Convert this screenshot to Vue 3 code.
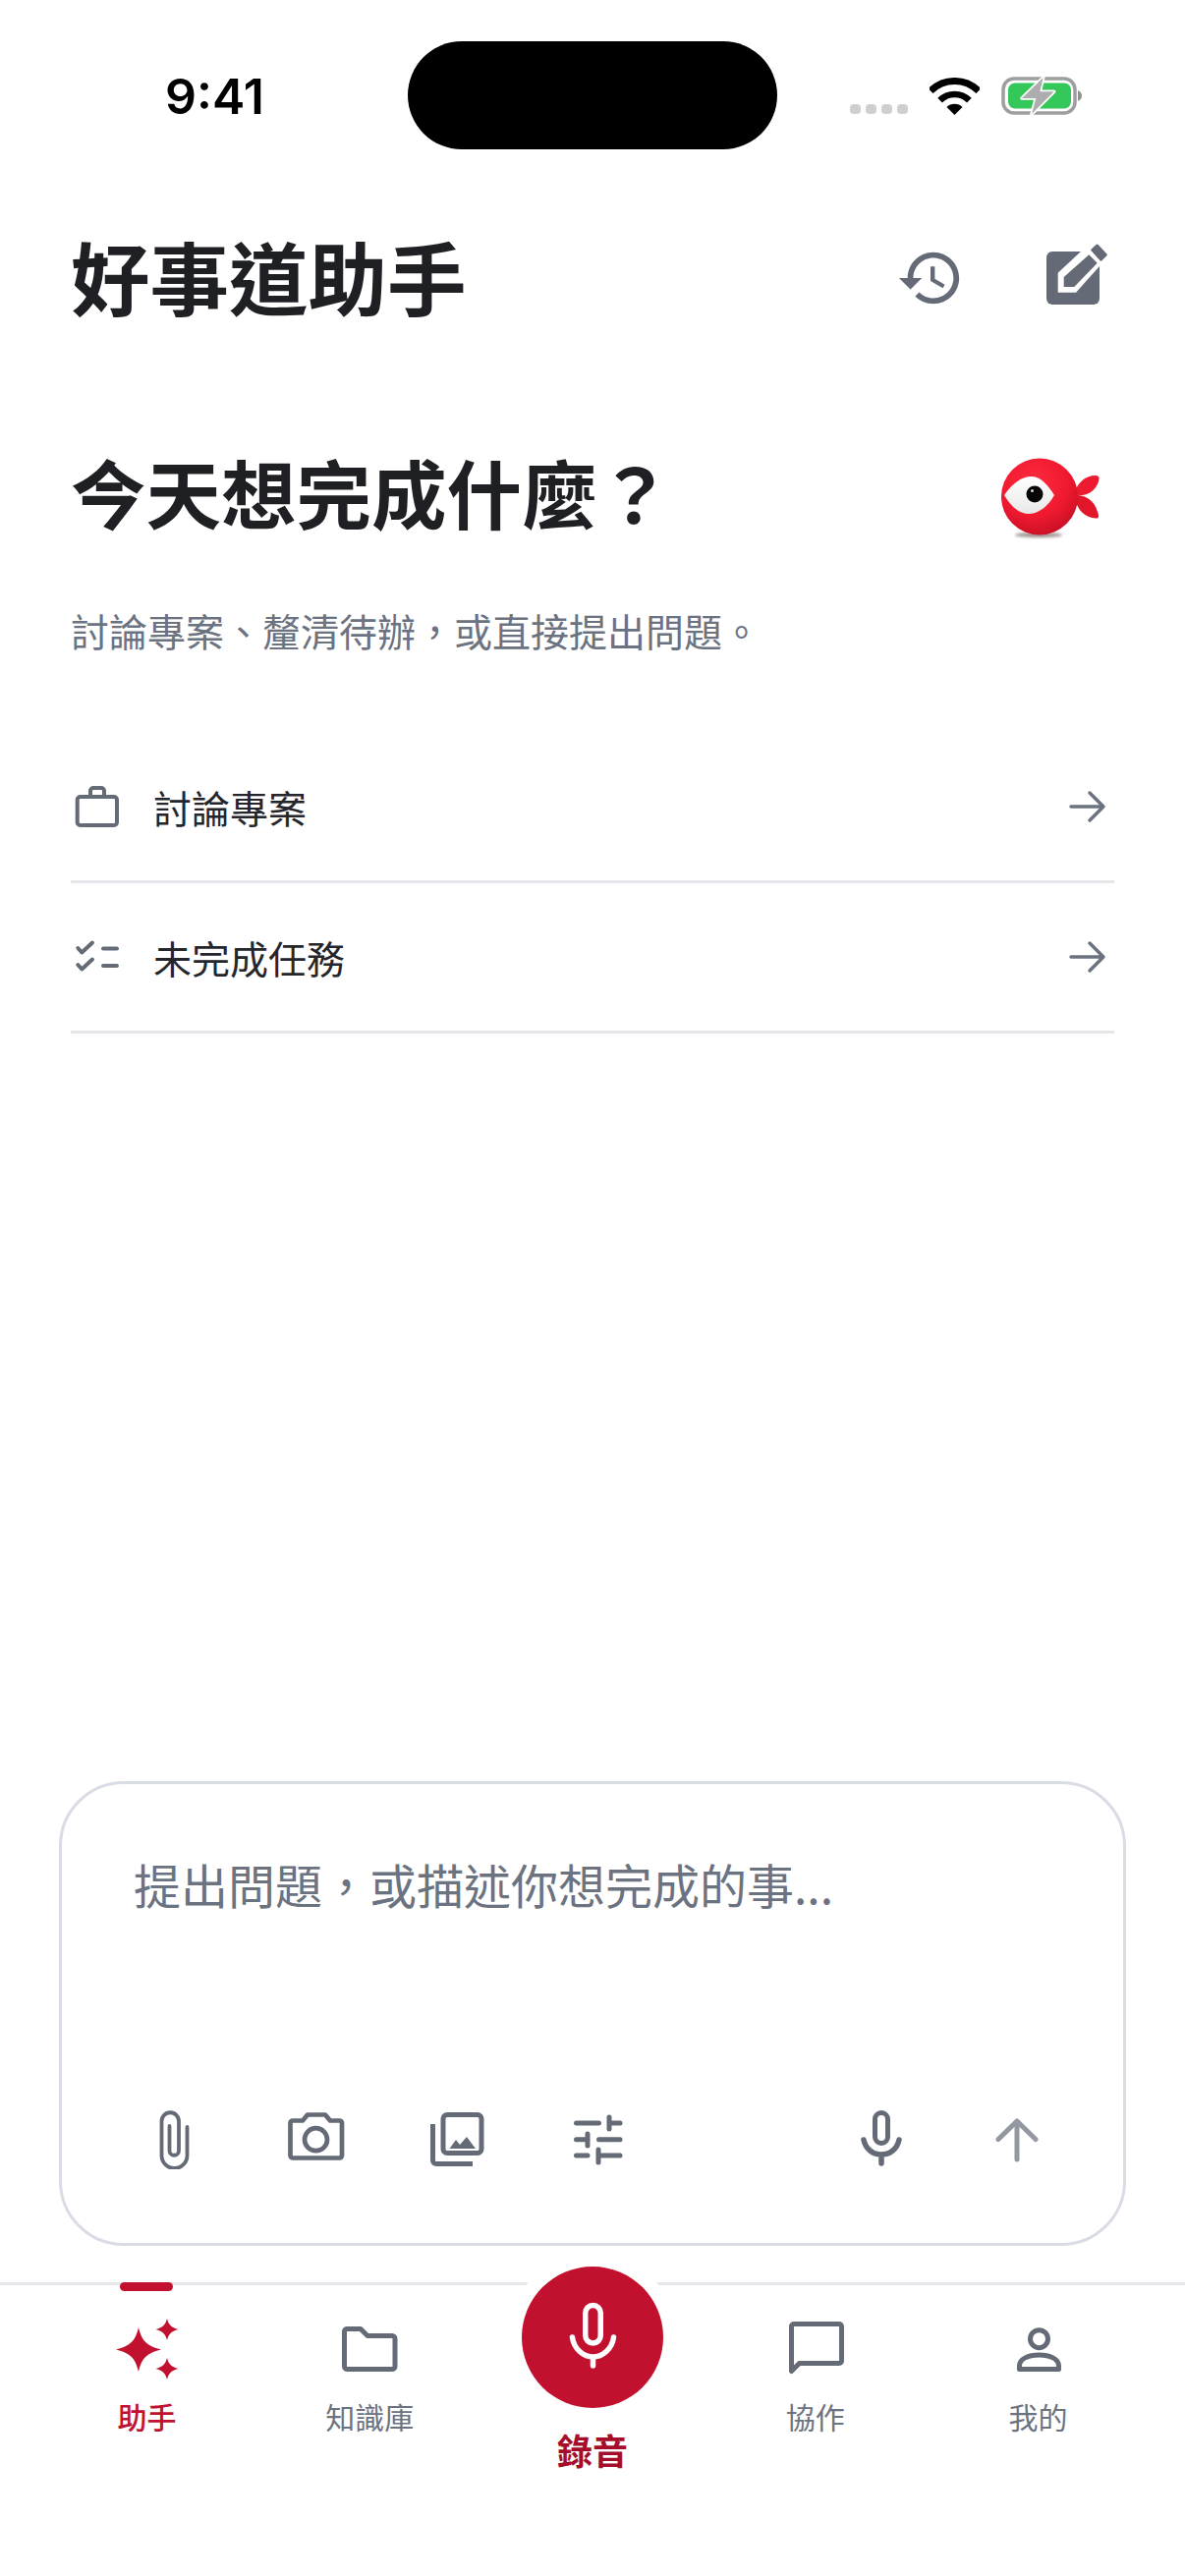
<template>
  <div class="phone">
    <header class="status-bar">
      <span class="clock">9:41</span>
      <div class="island"></div>
      <div class="status-icons">
        <div class="signal"><i></i><i></i><i></i><i></i></div>
        <svg class="wifi" viewBox="0 0 51 38">
          <path d="M25.5 38 17.5 30A11.3 11.3 0 0 1 33.5 30Z" fill="#000" />
          <path d="M10.6 23.1a21 21 0 0 1 29.8 0" fill="none" stroke="#000" stroke-width="6.5" />
          <path d="M1.1 13.6a34.5 34.5 0 0 1 48.800 0" fill="none" stroke="#000" stroke-width="7" />
        </svg>
        <svg class="battery" viewBox="0 0 82 40">
          <rect x="2" y="2" width="73" height="35" rx="11" fill="none" stroke="#9e9e9e" stroke-width="3.5" />
          <rect x="7" y="6.500" width="64" height="26" rx="7" fill="#34c759" />
          <path d="M78 14c2.500 1 4 3 4 5.500s-1.500 4.500-4 5.500Z" fill="#8f8f8f" />
          <path d="M42.700 1 21 22H35.300L31 38 53.700 15.300H39.300Z" fill="#adadad" stroke="#fff" stroke-width="3.500" stroke-linejoin="round" paint-order="stroke" />
        </svg>
      </div>
    </header>

    <div class="app-bar">
      <h1>好事道助手</h1>
      <div class="app-actions">
        <svg class="history" viewBox="0 0 24 24">
          <path d="M13 3c-4.970 0-9 4.030-9 9H1l3.890 3.890.07.140L9 12H6c0-3.870 3.130-7 7-7s7 3.130 7 7-3.130 7-7 7c-1.930 0-3.680-.79-4.940-2.060l-1.420 1.420C8.270 19.990 10.510 21 13 21c4.970 0 9-4.030 9-9s-4.030-9-9-9zm-1 5v5l4.280 2.540.72-1.210-3.500-2.080V8H12z" />
        </svg>
        <svg class="compose" viewBox="0 0 70 70">
          <rect x="5" y="10" width="54" height="54" rx="6" fill="#646a76" />
          <path d="M16.700 51.700V31.700L40 10H59V25L35 51.700Z" fill="#fff" />
          <path d="M22.700 46V36L48.300 13.300 56.700 21.700 33.300 46Z" fill="#646a76" />
          <path d="M51.500 8.500 56.700 3.800 65.500 13.300 60.500 18.500Z" fill="#646a76" stroke="#646a76" stroke-width="2.500" stroke-linejoin="round" />
        </svg>
      </div>
    </div>

    <section class="intro">
      <div class="intro-head">
        <h2>今天想完成什麼？</h2>
        <svg class="fish" viewBox="0 0 120 100">
          <defs>
            <radialGradient id="fishBody" cx="42%" cy="32%" r="72%">
              <stop offset="0" stop-color="#ff2a3e" />
              <stop offset="0.6" stop-color="#f01a30" />
              <stop offset="1" stop-color="#c70f24" />
            </radialGradient>
            <linearGradient id="fishEye" x1="0" y1="0" x2="0" y2="1">
              <stop offset="0" stop-color="#ffffff" />
              <stop offset="1" stop-color="#e8e8e8" />
            </linearGradient>
            <filter id="fishBlur" x="-30%" y="-150%" width="160%" height="400%">
              <feGaussianBlur stdDeviation="1.800" />
            </filter>
          </defs>
          <ellipse cx="52" cy="85.500" rx="24" ry="2.500" fill="#5a4040" opacity="0.6" filter="url(#fishBlur)" />
          <path d="M88 44C91 33 99 25 110 25 114 25 114 28 113 31 110 41 100 48 88 44Z" fill="#ee1a30" />
          <path d="M88 45C100 44 109 51 112 62 114 67 113 69 110 68.500 98 68 90 58 88 45Z" fill="#e2162b" />
          <circle cx="53" cy="46.500" r="39" fill="url(#fishBody)" />
          <path d="M17 45C25 33 35 26 45 26 55 26 62 36 68 45 62 56 52 64 42 64 31 64 23 55 17 45Z" fill="url(#fishEye)" />
          <circle cx="48" cy="44" r="8.500" fill="#060606" />
          <circle cx="45.500" cy="40.500" r="1.500" fill="#d8d8d8" />
        </svg>
      </div>
      <p>討論專案、釐清待辦，或直接提出問題。</p>
    </section>

    <nav class="shortcuts">
      <div v-for="item in shortcuts" :key="item.label" class="shortcut">
        <svg class="shortcut-icon" viewBox="0 0 48 48" v-html="item.icon"></svg>
        <span>{{ item.label }}</span>
        <svg class="arrow" viewBox="0 0 40 40">
          <path d="M3 20h33M22 6l14 14-14 14" fill="none" stroke="#6b7280" stroke-width="3.500" stroke-linecap="round" stroke-linejoin="round" />
        </svg>
      </div>
    </nav>

    <section class="composer">
      <div class="placeholder">提出問題，或描述你想完成的事...</div>
      <div class="composer-tools">
        <div class="tools-left">
          <svg class="tool" viewBox="0 0 60 60">
            <path d="M43.500 17V46a13 13 0 0 1-26 0V11a8.750 8.750 0 0 1 17.500 0V41a4.750 4.750 0 0 1-9.500 0V16" fill="none" stroke="#646a76" stroke-width="3.800" stroke-linecap="round" />
          </svg>
          <svg class="tool" viewBox="0 0 60 60">
            <path d="M7 10.500H17L22 4.500H40L45 10.500H54.500A2.500 2.500 0 0 1 57 13V46A2.500 2.500 0 0 1 54.500 48.500H7A2.500 2.500 0 0 1 4.500 46V13A2.500 2.500 0 0 1 7 10.500Z" fill="none" stroke="#646a76" stroke-width="4.700" stroke-linejoin="round" />
            <circle cx="30.500" cy="29.700" r="11.500" fill="none" stroke="#646a76" stroke-width="4.700" />
          </svg>
          <svg class="tool" viewBox="0 0 60 60">
            <path d="M5.500 14V51a3.500 3.500 0 0 0 3.500 3.500H46" fill="none" stroke="#646a76" stroke-width="5" />
            <rect x="16" y="4.500" width="39" height="39" rx="4" fill="none" stroke="#646a76" stroke-width="5" />
            <path d="M22.500 39 29 30 33 35 40 27 49 39Z" fill="#646a76" />
          </svg>
          <svg class="tool" viewBox="0 0 60 60" fill="none" stroke="#646a76" stroke-width="5" stroke-linecap="round">
            <path d="M7.500 13H30.500M41 7V19M41 13H52M7.500 29.700H19M19 24V36M30.500 29.700H52M7.500 46H19M30 40V53M30 46H52" />
          </svg>
        </div>
        <div class="tools-right">
          <svg class="tool" viewBox="0 0 60 60" fill="none" stroke="#646a76" stroke-linecap="round">
            <rect x="23.500" y="2.500" width="13" height="31" rx="6.500" stroke-width="5" />
            <path d="M12 30C14 40 22 45 30 45 38 45 46 40 48 30M30 45V54" stroke-width="5.500" />
          </svg>
          <svg class="tool" viewBox="0 0 60 60" fill="none" stroke="#9297a0" stroke-width="5" stroke-linecap="round" stroke-linejoin="round">
            <path d="M30 50V11M11 29.500 30 11 49 29.500" />
          </svg>
        </div>
      </div>
    </section>

    <footer class="tab-bar">
      <div v-for="tab in tabs" :key="tab.label" class="tab" :class="{ active: tab.active, record: tab.record }">
        <i v-if="tab.active" class="tab-marker"></i>
        <div v-if="tab.record" class="record-button">
          <svg viewBox="0 0 54 72" fill="none" stroke="#fff" stroke-linecap="round">
            <rect x="19.750" y="5.500" width="15.500" height="38.500" rx="7.750" stroke-width="5.500" />
            <path d="M6.500 38C8 50 18 58 27.500 58 37 58 47 50 48.500 38M27.500 58V67" stroke-width="5.500" />
          </svg>
        </div>
        <svg v-else class="tab-icon" viewBox="0 0 66 66" v-html="tab.icon"></svg>
        <span>{{ tab.label }}</span>
      </div>
    </footer>
  </div>
</template>

<script setup>
const line = 'fill="none" stroke="#646a76" stroke-width="4"'

const shortcuts = [
  {
    label: '討論專案',
    icon: `<rect x="3.700" y="14" width="40.300" height="29" rx="3" ${line}/><path d="M17 12V8a3 3 0 0 1 3-3h8a3 3 0 0 1 3 3v4" ${line}/>`
  },
  {
    label: '未完成任務',
    icon: `<path d="M4.300 15 8.300 19.500 19 9.500M4.300 32 8.300 36.500 19 26.500M30 15.500H44M30 33H44" ${line} stroke-linecap="round" stroke-linejoin="round"/>`
  }
]

const grey = 'fill="none" stroke="#646a76" stroke-width="5" stroke-linejoin="round"'

const tabs = [
  {
    label: '助手',
    active: true,
    icon: '<g fill="#c1112f"><path d="M25 11C28 24 33 30 48 33.500 33 37 28 43 25 56 22 43 17 37 2 33.500 17 30 22 24 25 11Z"/><path d="M54 2C55.500 8 58 11 65.500 13 58 15 55.500 18 54 24 52.500 18 50 15 42.500 13 50 11 52.500 8 54 2Z"/><path d="M54 42C55.500 48 58 51 65.500 53 58 55 55.500 58 54 64 52.500 58 50 55 42.500 53 50 51 52.500 48 54 42Z"/></g>'
  },
  {
    label: '知識庫',
    icon: `<path d="M10 12.500H24L31 19.500H56A3 3 0 0 1 59 22.500V50.500A3 3 0 0 1 56 53.500H10.500A3 3 0 0 1 7.500 50.500V15A3 3 0 0 1 10 12.500Z" ${grey}/>`
  },
  { label: '錄音', record: true },
  {
    label: '協作',
    icon: `<path d="M11 7.500H57A2.500 2.500 0 0 1 59.500 10V45A2.500 2.500 0 0 1 57 47.500H16.500L8.500 55.500V10A2.500 2.500 0 0 1 11 7.500Z" ${grey}/>`
  },
  {
    label: '我的',
    icon: `<circle cx="33.500" cy="22.700" r="9" ${grey}/><path d="M13.500 53.500V50c0-7 9-11 20-11s20 4 20 11v3.500Z" ${grey}/>`
  }
]
</script>

<style>
html,
body {
  margin: 0;
  background: #fff;
}
</style>

<style scoped>
.phone {
  width: 1206px;
  height: 2622px;
  display: flex;
  flex-direction: column;
  background: #fff;
  overflow: hidden;
  font-family: "Noto Sans CJK TC", "Noto Sans", sans-serif;
  color: #1f2024;
}

.status-bar {
  height: 152px;
  flex: none;
  padding-top: 42px;
  box-sizing: border-box;
  display: flex;
  align-items: flex-start;
}

.clock {
  width: 415px;
  padding-top: 28px;
  padding-left: 22px;
  text-align: center;
  box-sizing: border-box;
  font: 600 50px/56px Inter, "Liberation Sans", sans-serif;
  color: #000;
}

.island {
  width: 376px;
  height: 110px;
  border-radius: 55px;
  background: #000;
}

.status-icons {
  margin-left: 74px;
  margin-top: 36px;
  display: flex;
  align-items: flex-end;
}

.signal {
  display: flex;
  gap: 5px;
  margin-bottom: 2px;
}

.signal i {
  width: 11px;
  height: 10px;
  border-radius: 4px;
  background: #cfcfcf;
}

.wifi {
  width: 51px;
  height: 38px;
  margin-left: 22px;
  margin-bottom: 1px;
}

.battery {
  width: 82px;
  height: 40px;
  margin-left: 22px;
}

.app-bar {
  flex: none;
  height: 116px;
  margin-top: 73px;
  padding: 0 72px;
  display: flex;
  align-items: center;
  justify-content: space-between;
}

h1 {
  margin: -6px 0 0;
  font-size: 80.500px;
  line-height: 116px;
  font-weight: 700;
}

.app-actions {
  display: flex;
  align-items: center;
  gap: 78px;
  margin-right: 4px;
}

.history {
  width: 70px;
  height: 70px;
  fill: #646a76;
}

.compose {
  width: 70px;
  height: 70px;
  margin-top: -4px;
}

.intro {
  flex: none;
  margin-top: 109px;
}

.intro-head {
  display: flex;
  align-items: center;
  justify-content: space-between;
  padding: 0 81px 0 72px;
  height: 100px;
}

h2 {
  margin: 0;
  font-size: 76.500px;
  line-height: 100px;
  font-weight: 700;
}

.fish {
  width: 120px;
  height: 100px;
  margin-top: 17px;
}

.intro p {
  margin: 63px 72px 0;
  font-size: 39px;
  line-height: 56px;
  color: #6b7280;
}

.shortcuts {
  flex: none;
  margin: 77px 72px 0;
}

.shortcut {
  height: 153px;
  box-sizing: border-box;
  border-bottom: 3px solid #e5e7eb;
  display: flex;
  align-items: center;
  font-size: 39px;
  color: #24262b;
}

.shortcut-icon {
  width: 48px;
  height: 48px;
  margin-left: 3px;
}

.shortcut span {
  margin-left: 33px;
}

.arrow {
  width: 40px;
  height: 40px;
  margin-left: auto;
  margin-right: 7px;
}

.composer {
  flex: none;
  margin: auto 60px 0;
  height: 473px;
  box-sizing: border-box;
  border: 3px solid #d9dce5;
  border-radius: 66px;
  padding: 69px 72px 0 73px;
  display: flex;
  flex-direction: column;
}

.placeholder {
  font-size: 48px;
  line-height: 64px;
  color: #6b7280;
}

.composer-tools {
  margin-top: 199px;
  display: flex;
  justify-content: space-between;
}

.tools-left,
.tools-right {
  display: flex;
  align-items: center;
}

.tools-left {
  gap: 84px;
  margin-left: 11px;
}

.tools-right {
  gap: 78px;
  margin-right: 6px;
}

.tool {
  width: 60px;
  height: 60px;
}

.tab-bar {
  flex: none;
  margin-top: 37px;
  height: 299px;
  box-sizing: border-box;
  border-top: 3px solid #e5e7eb;
  padding: 0 36px;
  display: grid;
  grid-template-columns: repeat(5, 1fr);
}

.tab {
  position: relative;
  display: flex;
  flex-direction: column;
  align-items: center;
  padding-top: 32px;
  font-size: 30px;
  line-height: 42px;
  color: #6b7280;
}

.tab-icon {
  width: 66px;
  height: 66px;
  overflow: visible;
}

.tab span {
  margin-top: 14px;
}

.tab.active {
  color: #c1112f;
  font-weight: 500;
}

.tab-marker {
  position: absolute;
  top: -3px;
  left: 50%;
  width: 54px;
  height: 9px;
  margin-left: -27px;
  border-radius: 5px;
  background: #c1112f;
}

.record-button {
  position: absolute;
  top: -19px;
  left: 50%;
  width: 144px;
  height: 144px;
  margin-left: -72px;
  border-radius: 50%;
  background: #c1112f;
  box-shadow: 0 0 0 14px #fff;
  display: flex;
  align-items: center;
  justify-content: center;
}

.record-button svg {
  width: 54px;
  height: 72px;
  margin-top: -4px;
}

.tab.record {
  padding-top: 142px;
  font-size: 36px;
  font-weight: 700;
  color: #a50e2b;
}

.tab.record span {
  margin-top: 4px;
}
</style>
